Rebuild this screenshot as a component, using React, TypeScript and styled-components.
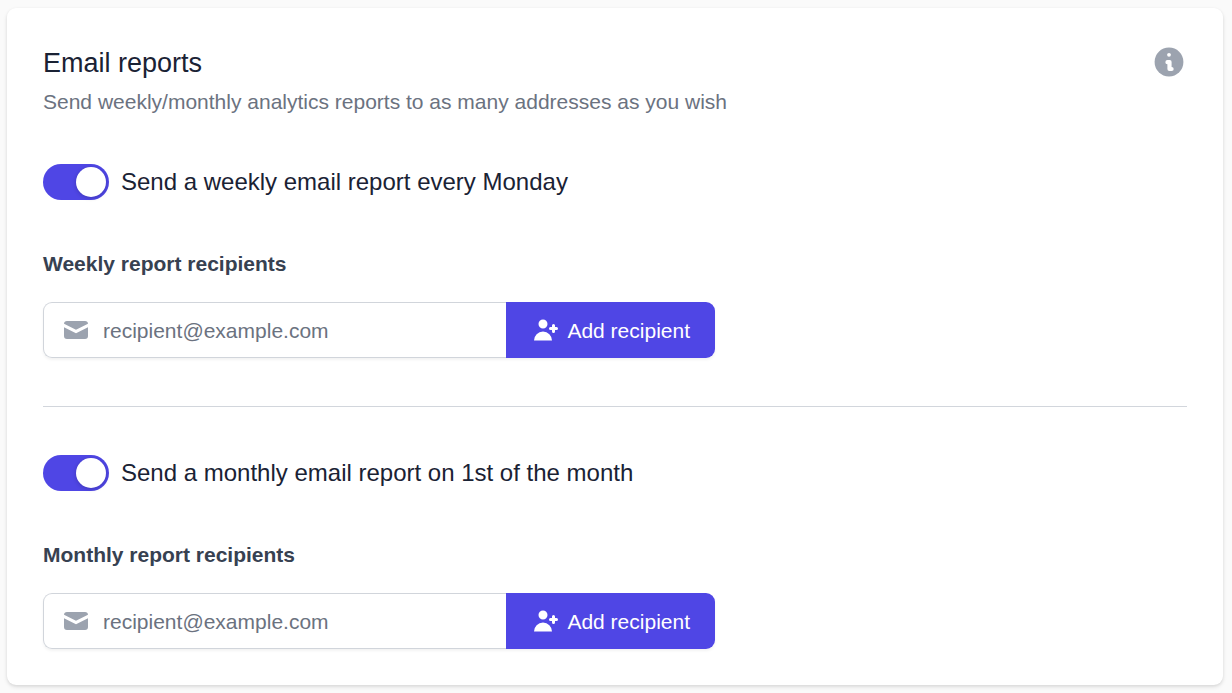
import React, { useState } from "react";
import styled, { createGlobalStyle } from "styled-components";

const GlobalStyle = createGlobalStyle`
  *, *::before, *::after { box-sizing: border-box; }
  body {
    margin: 0;
    background: #fafafa;
    color: #1a2234;
    font-family: "Liberation Sans", Arial, sans-serif;
    font-size: 24px;
    line-height: 36px;
  }
`;

const Card = styled.main`
  margin: 8px 9px 8px 7px;
  padding: 36px;
  background: #fff;
  border-radius: 9px;
  box-shadow: 0 2px 4px rgba(0, 0, 0, 0.1), 0 1px 3px rgba(0, 0, 0, 0.06);
`;

const Header = styled.header`
  display: flex;
  justify-content: space-between;
  align-items: flex-start;
  margin-bottom: 46px;
`;

const Title = styled.h1`
  margin: 0;
  font-size: 27px;
  line-height: 38px;
  font-weight: 400;
`;

const Subtitle = styled.p`
  margin: 4px 0 0;
  font-size: 21px;
  line-height: 32px;
  color: #6b7280;
`;

const HelpLink = styled.a`
  display: block;
  color: #9ca3af;
`;

const Icon = styled.svg<{ $size: number }>`
  display: block;
  flex: none;
  width: ${(p) => p.$size}px;
  height: ${(p) => p.$size}px;
  fill: currentColor;
`;

const Section = styled.section`
  & + & {
    margin-top: 48px;
    padding-top: 48px;
    border-top: 1px solid #d2d6dc;
  }
`;

const SwitchRow = styled.label`
  display: flex;
  align-items: center;
  gap: 12px;
`;

const Switch = styled.input`
  appearance: none;
  flex: none;
  width: 66px;
  height: 36px;
  margin: 0;
  padding: 3px;
  border-radius: 18px;
  background: #e5e7eb;
  cursor: pointer;

  &::before {
    content: "";
    display: block;
    width: 30px;
    height: 30px;
    border-radius: 50%;
    background: #fff;
    box-shadow: 0 1px 4px rgba(0, 0, 0, 0.2);
  }
  &:checked { background: #4f46e5; }
  &:checked::before { margin-left: 30px; }
`;

const FieldLabel = styled.label`
  display: block;
  margin: 48px 0 22px;
  font-size: 21px;
  line-height: 32px;
  font-weight: 700;
  color: #374151;
`;

const RecipientForm = styled.form`
  display: flex;
  max-width: 672px;
  height: 56px;
  border-radius: 9px;
  box-shadow: 0 2px 3px rgba(0, 0, 0, 0.05);
`;

const InputShell = styled.div`
  display: flex;
  flex: 1;
  align-items: center;
  gap: 12px;
  min-width: 0;
  padding-left: 17px;
  border: 1px solid #d1d5db;
  border-right: 0;
  border-radius: 9px 0 0 9px;
  color: #9ca3af;
`;

const EmailInput = styled.input`
  flex: 1;
  min-width: 0;
  height: 31px;
  padding: 0;
  border: 0;
  outline: 0;
  background: transparent;
  color: #1a2234;
  font: inherit;
  font-size: 21px;
  line-height: 31px;

  &::placeholder { color: #6b7280; opacity: 1; }
`;

const AddButton = styled.button`
  display: flex;
  align-items: center;
  gap: 6px;
  padding: 0 25px;
  border: 0;
  border-radius: 0 9px 9px 0;
  background: #4f46e5;
  color: #fff;
  font: inherit;
  font-size: 21px;
  line-height: 31px;
  white-space: nowrap;
  cursor: pointer;
`;

function InfoIcon() {
  return (
    <Icon $size={36} viewBox="0 0 36 36" aria-hidden="true">
      <circle cx="18" cy="18" r="14.4" />
      <g fill="#fff">
        <circle cx="18" cy="10.8" r="1.9" />
        <path d="M16.5 16.1h2.2a1.9 1.9 0 0 1 1.9 2v4.8a2 2 0 0 1 .1 4.1h-2.4a2 2 0 0 1-1.9-2v-4.7a2.1 2.1 0 0 1 .1-4.2z" />
      </g>
    </Icon>
  );
}

function MailIcon() {
  return (
    <Icon $size={30} viewBox="0 0 20 20" aria-hidden="true">
      <path d="M2.003 5.884L10 9.882l7.997-3.998A2 2 0 0016 4H4a2 2 0 00-1.997 1.884z" />
      <path d="M18 8.118l-8 4-8-4V14a2 2 0 002 2h12a2 2 0 002-2V8.118z" />
    </Icon>
  );
}

function UserAddIcon() {
  return (
    <Icon $size={30} viewBox="0 0 20 20" aria-hidden="true">
      <path d="M8 9a3 3 0 100-6 3 3 0 000 6zM8 11a6 6 0 016 6H2a6 6 0 016-6zM16 7a1 1 0 10-2 0v1h-1a1 1 0 100 2h1v1a1 1 0 102 0v-1h1a1 1 0 100-2h-1V7z" />
    </Icon>
  );
}

interface ReportProps {
  id: string;
  toggleText: string;
  recipientsText: string;
}

function ReportSection({ id, toggleText, recipientsText }: ReportProps) {
  const [enabled, setEnabled] = useState(true);
  const [email, setEmail] = useState("");
  return (
    <Section>
      <SwitchRow>
        <Switch
          type="checkbox"
          role="switch"
          checked={enabled}
          onChange={(e) => setEnabled(e.target.checked)}
        />
        {toggleText}
      </SwitchRow>
      <FieldLabel htmlFor={id}>{recipientsText}</FieldLabel>
      <RecipientForm onSubmit={(e) => e.preventDefault()}>
        <InputShell>
          <MailIcon />
          <EmailInput
            id={id}
            type="email"
            placeholder="recipient@example.com"
            value={email}
            onChange={(e) => setEmail(e.target.value)}
          />
        </InputShell>
        <AddButton type="submit">
          <UserAddIcon />
          Add recipient
        </AddButton>
      </RecipientForm>
    </Section>
  );
}

export default function App() {
  return (
    <>
      <GlobalStyle />
      <Card>
        <Header>
          <div>
            <Title>Email reports</Title>
            <Subtitle>Send weekly/monthly analytics reports to as many addresses as you wish</Subtitle>
          </div>
          <HelpLink href="#help" aria-label="Help with email reports">
            <InfoIcon />
          </HelpLink>
        </Header>
        <ReportSection
          id="weekly-recipient"
          toggleText="Send a weekly email report every Monday"
          recipientsText="Weekly report recipients"
        />
        <ReportSection
          id="monthly-recipient"
          toggleText="Send a monthly email report on 1st of the month"
          recipientsText="Monthly report recipients"
        />
      </Card>
    </>
  );
}
